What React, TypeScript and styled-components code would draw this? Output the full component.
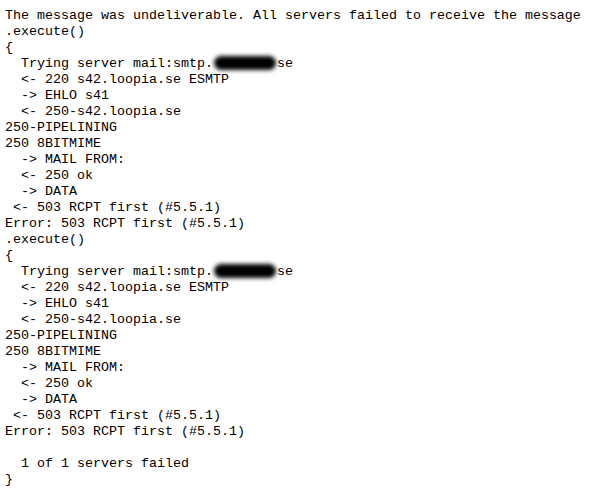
import React from "react";
import styled, { createGlobalStyle } from "styled-components";

const Global = createGlobalStyle`
  html, body { background: #ffffff; }
  body { margin: 8px 0 0 5px; }
`;

const Log = styled.pre`
  margin: 0;
  font-family: "Liberation Mono", "Courier New", monospace;
  font-size: 13.333px;
  line-height: 16px;
  color: #000000;
  white-space: pre;
`;

const Redacted = styled.span`
  display: inline-block;
  width: 62px;
  height: 14px;
  margin: 0 1px;
  vertical-align: -3px;
  background: #000;
  border-radius: 8px;
  filter: blur(2.2px);
`;

const Server = () => (
  <>
    {"  Trying server mail:smtp."}
    <Redacted />
    {"se\n"}
  </>
);

const block = (
  <>
    {".execute()\n{\n"}
    <Server />
    {"  <- 220 s42.loopia.se ESMTP\n"}
    {"  -> EHLO s41\n"}
    {"  <- 250-s42.loopia.se\n"}
    {"250-PIPELINING\n"}
    {"250 8BITMIME\n"}
    {"  -> MAIL FROM:\n"}
    {"  <- 250 ok\n"}
    {"  -> DATA\n"}
    {" <- 503 RCPT first (#5.5.1)\n"}
    {"Error: 503 RCPT first (#5.5.1)\n"}
  </>
);

export default function App() {
  return (
    <>
      <Global />
      <Log>
        {"The message was undeliverable. All servers failed to receive the message\n"}
        {block}
        {block}
        {"\n  1 of 1 servers failed\n}"}
      </Log>
    </>
  );
}
